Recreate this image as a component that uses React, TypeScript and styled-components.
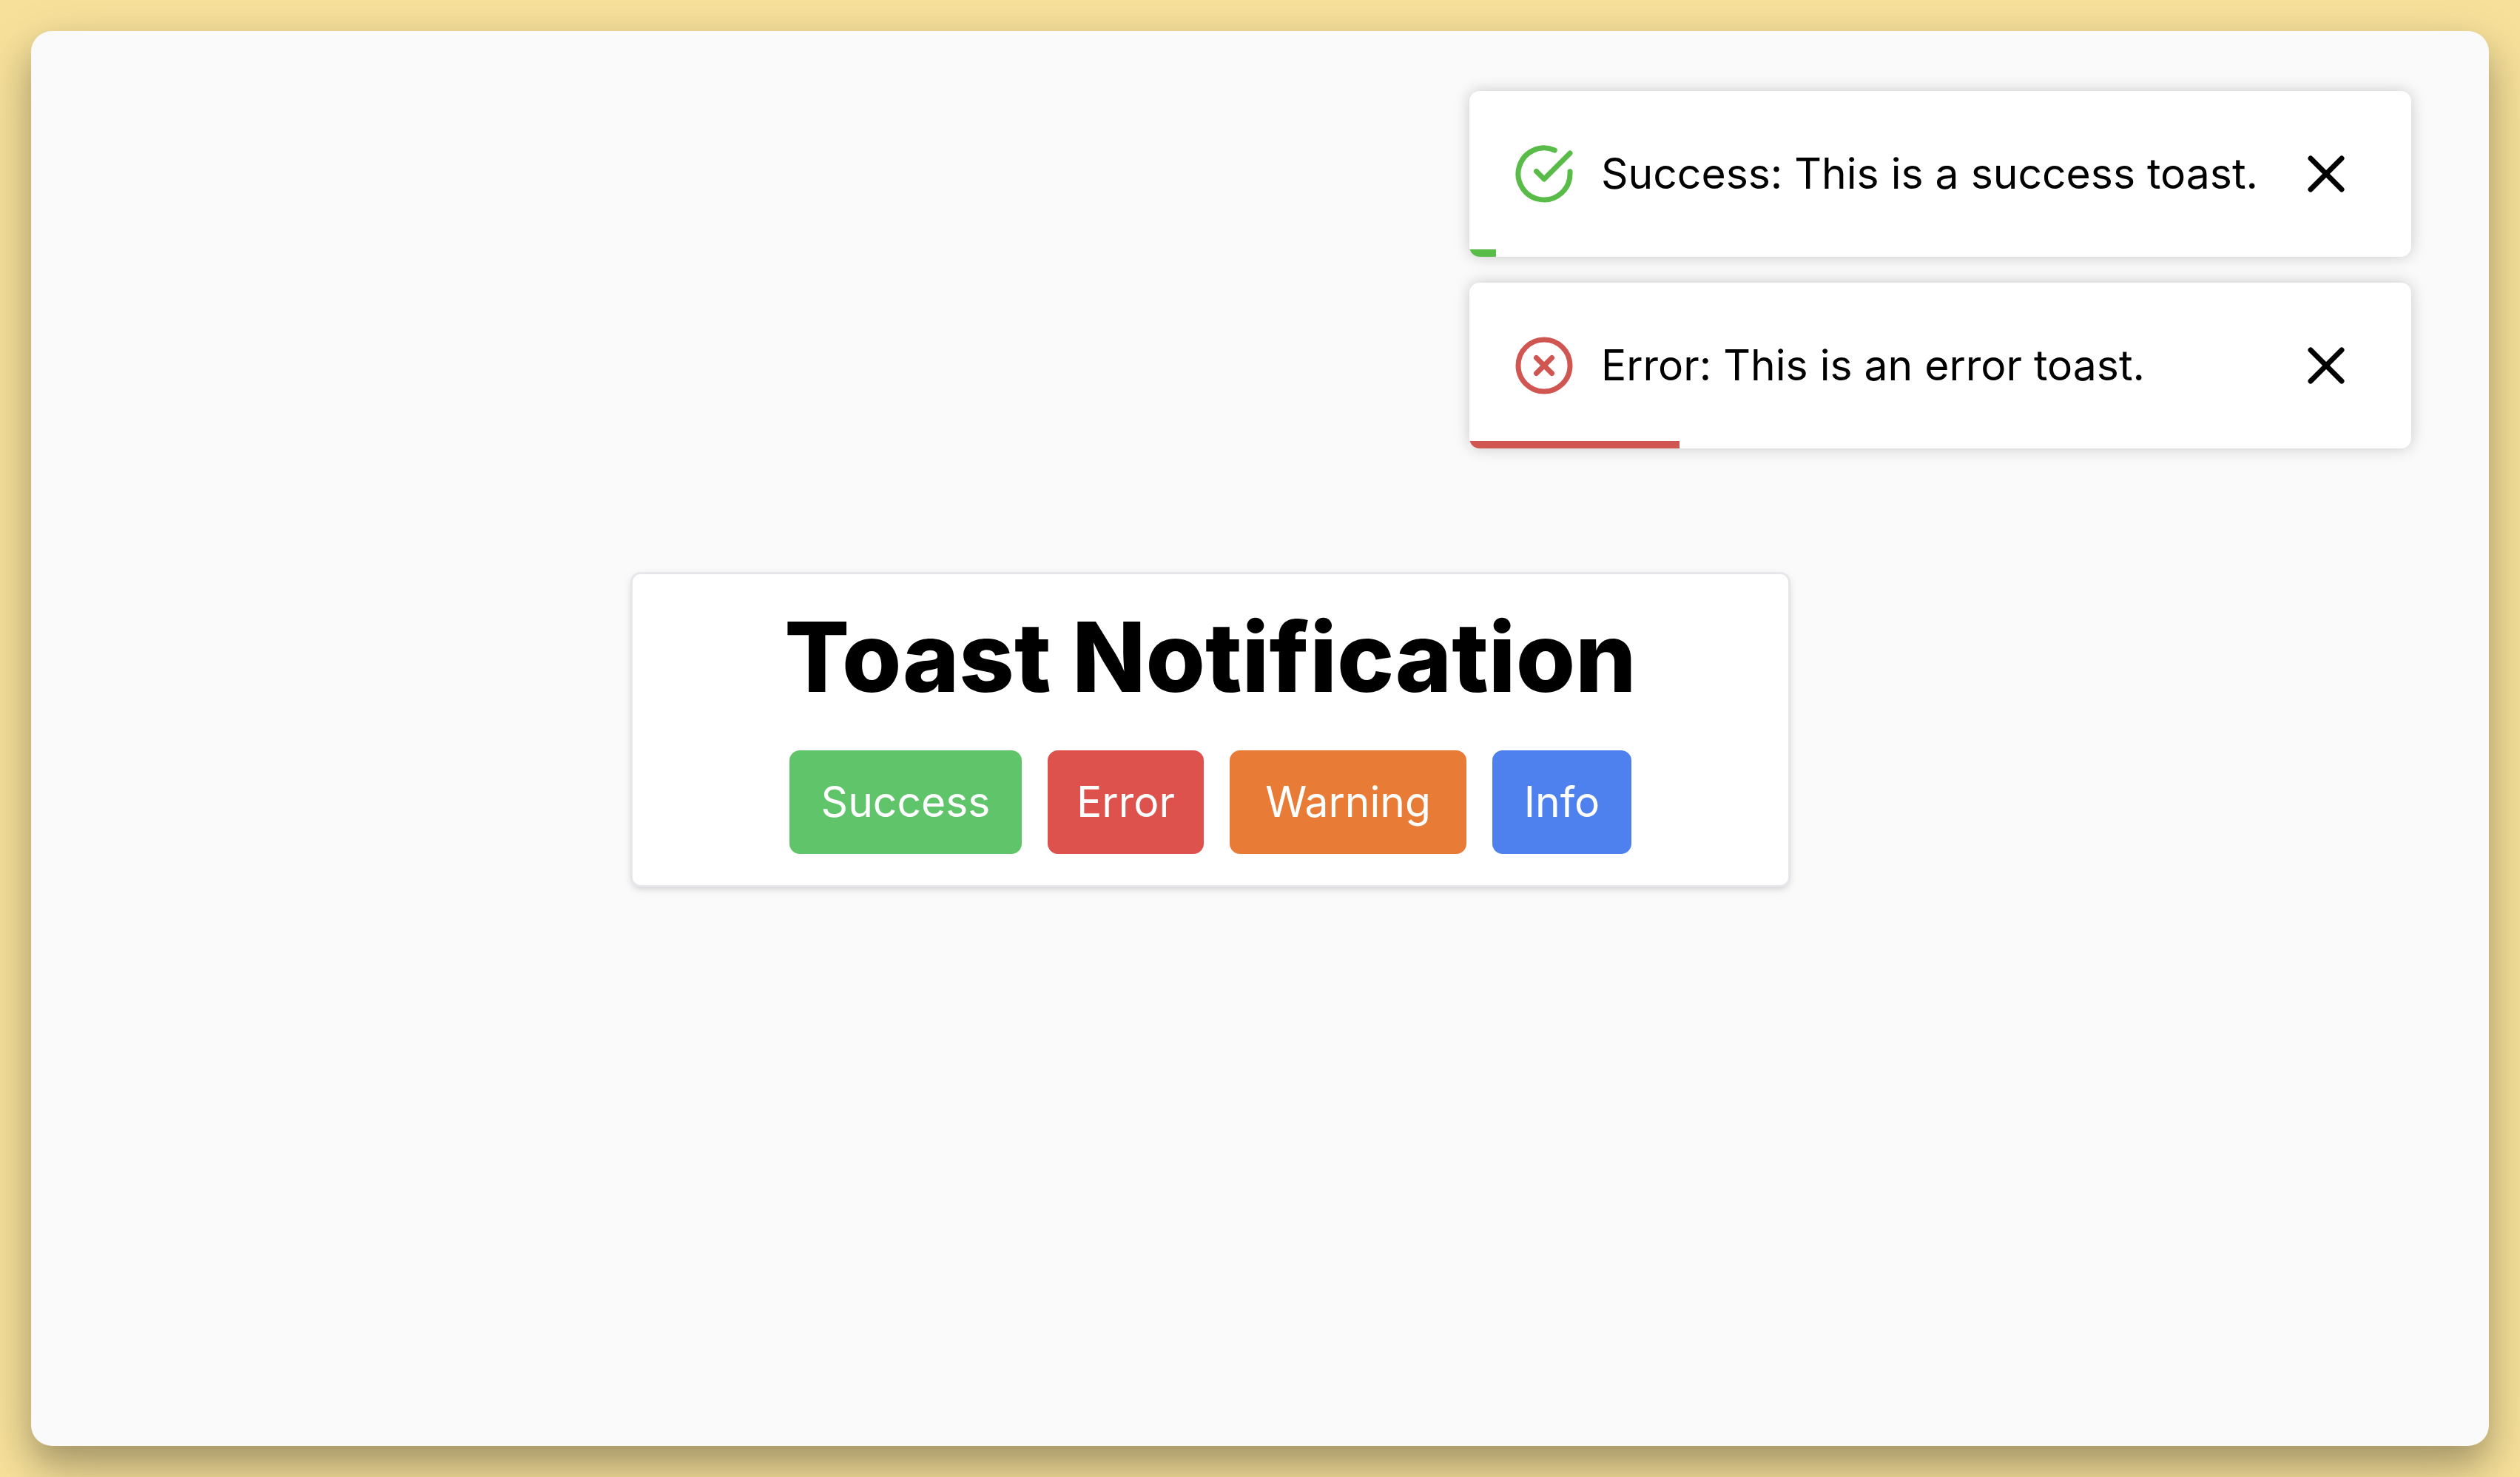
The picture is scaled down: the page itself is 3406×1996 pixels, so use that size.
import React, { useState } from 'react';
import styled, { createGlobalStyle } from 'styled-components';
import { FiCheckCircle, FiX, FiXCircle } from 'react-icons/fi';

const GlobalStyle = createGlobalStyle`
  *, *::before, *::after { box-sizing: border-box; }
  body {
    margin: 0;
    background: #f6e09a;
    font-family: Inter, "Liberation Sans", sans-serif;
    color: #000;
  }
  h1, p { margin: 0; }
  button { font: inherit; border: 0; cursor: pointer; }
`;

const Desktop = styled.div`
  display: flex;
  min-height: 100vh;
  padding: 42px;
`;

const Panel = styled.main`
  position: relative;
  flex: 1;
  display: flex;
  align-items: center;
  justify-content: center;
  padding: 0 134px 24px 0;
  border-radius: 28px;
  background: #fafafa;
  box-shadow: 0 26px 46px rgba(0, 0, 0, 0.24), 0 26px 84px rgba(0, 0, 0, 0.14);
`;

const Card = styled.section`
  display: flex;
  flex-direction: column;
  align-items: center;
  gap: 56px;
  width: 100%;
  max-width: 1568px;
  padding: 42px;
  border: 3px solid #e5e7eb;
  border-radius: 14px;
  background: #fff;
  box-shadow: 0 4px 11px rgba(0, 0, 0, 0.1), 0 4px 7px -4px rgba(0, 0, 0, 0.1);
`;

const Title = styled.h1`
  font-size: 130px;
  line-height: 140px;
  font-weight: 800;
`;

const Actions = styled.div`
  display: grid;
  grid-template-columns: 314fr 211fr 320fr 188fr;
  gap: 35px;
  width: 100%;
  max-width: 1138px;
`;

const ActionButton = styled.button<{ $color: string }>`
  padding: 28px 0;
  border-radius: 14px;
  background: ${(p) => p.$color};
  color: #fff;
  font-size: 57px;
  line-height: 84px;
`;

const ToastStack = styled.div`
  position: absolute;
  top: 81px;
  right: 105px;
  display: flex;
  flex-direction: column;
  gap: 35px;
  width: 1273px;
`;

const ToastBox = styled.div<{ $color: string }>`
  position: relative;
  display: flex;
  align-items: center;
  gap: 35px;
  height: 224px;
  padding: 0 59px;
  border-radius: 14px;
  overflow: hidden;
  background: #fff;
  box-shadow: 0 0 21px rgba(0, 0, 0, 0.2);

  > svg {
    flex: none;
    color: ${(p) => p.$color};
  }
`;

const Message = styled.p`
  flex: 1;
  font-size: 57px;
  line-height: 84px;
  white-space: nowrap;
`;

const CloseButton = styled.button`
  display: flex;
  flex: none;
  margin-left: -14px;
  padding: 14px;
  background: none;
  color: #000;
`;

const Progress = styled.div<{ $color: string }>`
  position: absolute;
  left: 0;
  bottom: 0;
  height: 10px;
  background: ${(p) => p.$color};
`;

const actions = [
  { label: 'Success', color: '#5fc46a' },
  { label: 'Error', color: '#dd524c' },
  { label: 'Warning', color: '#e87b35' },
  { label: 'Info', color: '#4e80ee' },
];

const initialToasts = [
  { id: 1, Icon: FiCheckCircle, color: '#59bc49', text: 'Success: This is a success toast.', left: 36 / 1273 },
  { id: 2, Icon: FiXCircle, color: '#d05651', text: 'Error: This is an error toast.', left: 284 / 1273 },
];

export default function App() {
  const [toasts, setToasts] = useState(initialToasts);

  return (
    <>
      <GlobalStyle />
      <Desktop>
        <Panel>
          <Card>
            <Title>Toast Notification</Title>
            <Actions>
              {actions.map((a) => (
                <ActionButton key={a.label} type="button" $color={a.color}>
                  {a.label}
                </ActionButton>
              ))}
            </Actions>
          </Card>
          <ToastStack>
            {toasts.map(({ id, Icon, color, text, left }) => (
              <ToastBox key={id} role="status" $color={color}>
                <Icon size={84} aria-hidden />
                <Message>{text}</Message>
                <CloseButton
                  type="button"
                  aria-label="Close"
                  onClick={() => setToasts((list) => list.filter((t) => t.id !== id))}
                >
                  <FiX size={84} aria-hidden />
                </CloseButton>
                <Progress $color={color} style={{ width: `${left * 100}%` }} />
              </ToastBox>
            ))}
          </ToastStack>
        </Panel>
      </Desktop>
    </>
  );
}
